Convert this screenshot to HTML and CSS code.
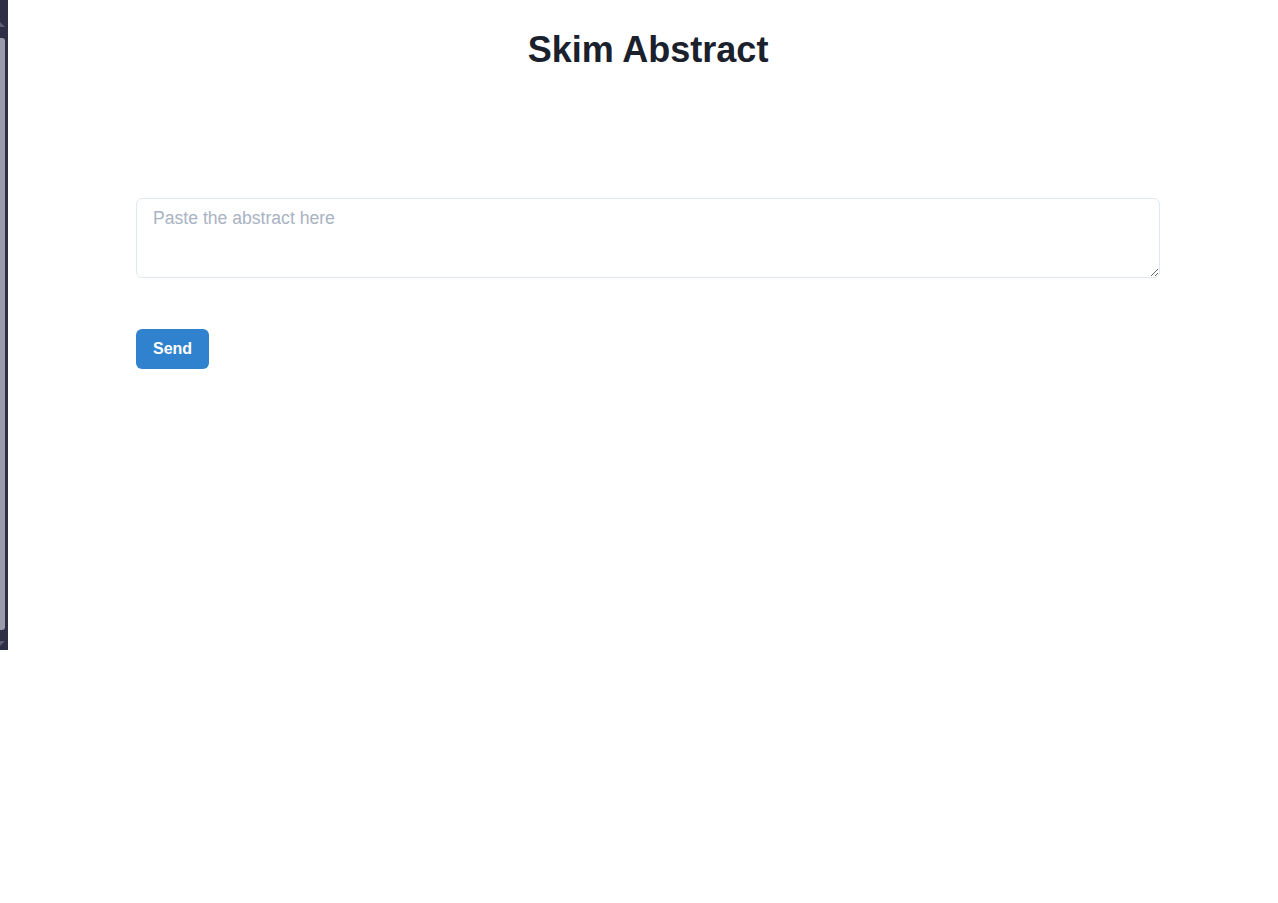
FILE: index.html
```html
<!DOCTYPE html>
<html lang="en">
<head>
<meta charset="utf-8">
<title>Skim Abstract</title>
<link rel="stylesheet" href="styles.css">
</head>
<body>
<div class="layout">
  <aside class="edge">
    <span class="arrow arrow-up"></span>
    <span class="thumb"></span>
    <span class="arrow arrow-down"></span>
  </aside>
  <main class="page">
    <h1 class="title">Skim Abstract</h1>
    <form class="form">
      <textarea class="abstract" placeholder="Paste the abstract here"></textarea>
      <button type="button" class="send">Send</button>
    </form>
  </main>
</div>
</body>
</html>
```
FILE: styles.css
```css
html, body {
  margin: 0;
  padding: 0;
  background: #ffffff;
  overflow: hidden;
}
body {
  font-family: "Liberation Sans", Arial, sans-serif;
  color: #1a202c;
}
.layout {
  display: flex;
  align-items: flex-start;
  width: 1288px;
}
.edge {
  flex: 0 0 8px;
  height: 650px;
  background: #2e2f44;
  display: flex;
  flex-direction: column;
  align-items: flex-start;
  padding-top: 22px;
  box-sizing: border-box;
}
.arrow {
  width: 0;
  height: 0;
}
.arrow-up {
  border-bottom: 5px solid #5d5e72;
  border-right: 5px solid transparent;
}
.thumb {
  margin-top: 11px;
  width: 5px;
  height: 592px;
  background: #9b9cab;
  border-radius: 0 3px 3px 0;
}
.arrow-down {
  margin-top: 11px;
  border-top: 5px solid #5d5e72;
  border-right: 5px solid transparent;
}
.page {
  flex: 0 0 1280px;
  box-sizing: border-box;
  padding: 28px 128px 0;
}
.title {
  margin: 0;
  text-align: center;
  font-size: 36px;
  line-height: 1.2;
  font-weight: 700;
  color: #1a202c;
}
.form {
  margin-top: 127px;
  display: flex;
  flex-direction: column;
  align-items: flex-start;
  gap: 51px;
}
.abstract {
  display: block;
  width: 100%;
  height: 80px;
  box-sizing: border-box;
  border: 1px solid #e2e8f0;
  border-radius: 6px;
  padding: 7px 16px;
  font-family: "Liberation Sans", Arial, sans-serif;
  font-size: 17.6px;
  line-height: 1.375;
  color: #1a202c;
  resize: vertical;
  outline: none;
}
.abstract::placeholder {
  color: #a9b3c3;
}
.send {
  height: 40px;
  padding: 0 17px;
  border: 0;
  border-radius: 6px;
  background: #3182ce;
  color: #ffffff;
  font-family: "Liberation Sans", Arial, sans-serif;
  font-size: 16px;
  font-weight: 700;
  cursor: pointer;
}
```
